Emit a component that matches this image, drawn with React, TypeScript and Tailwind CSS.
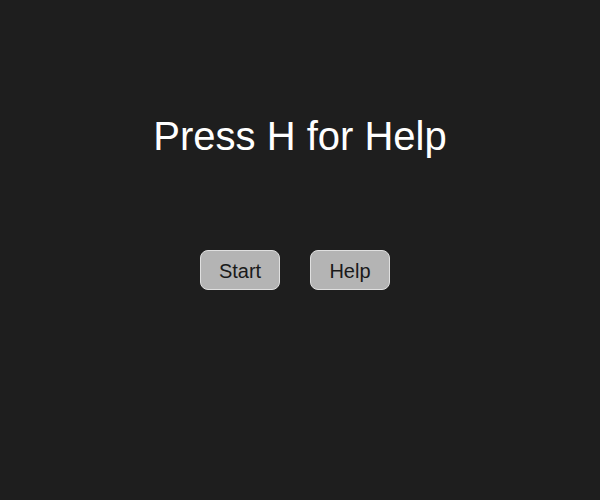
import React from 'react';

const App = () => {
  return (
    <div className="w-[600px] h-[500px] bg-[#1e1e1e] flex flex-col items-center font-['Liberation_Sans',Arial,sans-serif]">
      {/* Title */}
      <h1 className="mt-[113px] text-[40px] leading-[46px] text-white">Press H for Help</h1>

      {/* Buttons */}
      <div className="mt-[91px] flex justify-center gap-[30px] pr-[10px]">
        <button className="w-[80px] h-[40px] pt-[2px] rounded-[8px] border border-[#e0e0e0] bg-[#b4b4b4] text-[20px] text-[#1a1a1a]">
          Start
        </button>
        <button className="w-[80px] h-[40px] pt-[2px] rounded-[8px] border border-[#e0e0e0] bg-[#b4b4b4] text-[20px] text-[#1a1a1a]">
          Help
        </button>
      </div>
    </div>
  );
};

export default App;
